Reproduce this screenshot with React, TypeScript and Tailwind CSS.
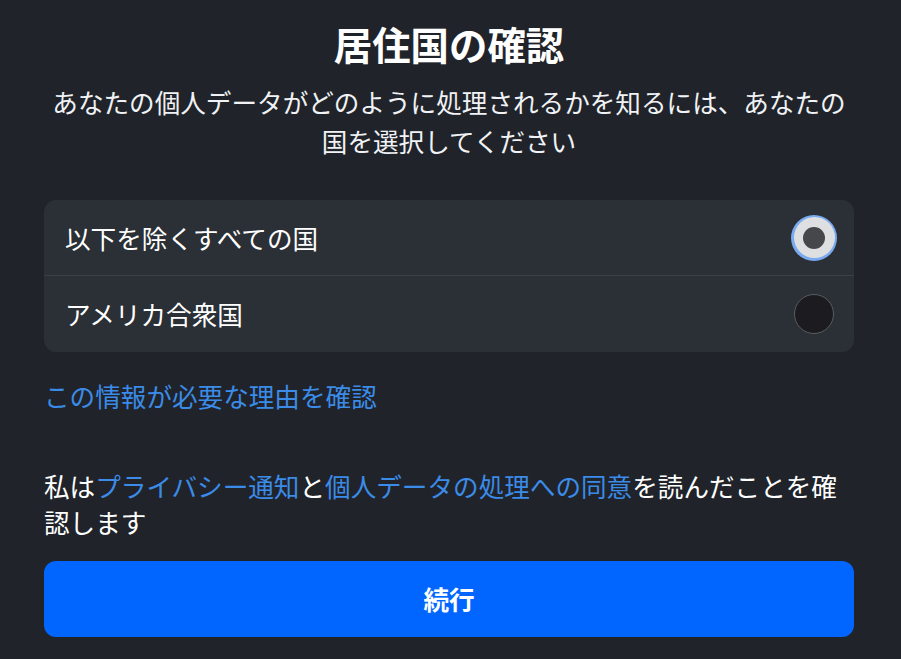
export default function App() {
  const font = { fontFamily: '"Noto Sans CJK JP", "Noto Sans", sans-serif' };
  return (
    <main
      style={font}
      className="min-h-screen bg-[#20242a] text-white pl-[44px] pr-[47px] pt-[18px] pb-10"
    >
      <h1 className="text-center text-[38.4px] font-bold leading-[50px]">居住国の確認</h1>
      <p className="mt-[14px] text-center text-[25.6px] leading-[39px] text-[#f0f2f5]">
        あなたの個人データがどのように処理されるかを知るには、あなたの国を選択してください
      </p>

      {/* Country options */}
      <div className="mt-[40px] rounded-[12px] bg-[#2b2f36] overflow-hidden">
        <label className="flex items-center justify-between h-[76px] pl-[21px] pr-[17px] border-b border-[#3b3f46]">
          <span className="text-[25.6px] leading-none">以下を除くすべての国</span>
          <span className="flex items-center justify-center w-[46px] h-[46px] rounded-full bg-[#7aaaf0]">
            <span className="flex items-center justify-center w-[41px] h-[41px] rounded-full bg-[#dedfe1]">
              <span className="w-[22px] h-[22px] rounded-full bg-[#45474b]" />
            </span>
          </span>
        </label>
        <label className="flex items-center justify-between h-[76px] pl-[21px] pr-[20px]">
          <span className="text-[25.6px] leading-none">アメリカ合衆国</span>
          <span className="w-[40px] h-[40px] rounded-full bg-[#1c1c20] border border-[#5b5c60]" />
        </label>
      </div>

      <a className="block mt-[26px] text-[25.6px] leading-[36px] text-[#3b8be8]">
        この情報が必要な理由を確認
      </a>

      <p className="mt-[54px] text-[25.6px] leading-[36px]">
        私は<a className="text-[#3b8be8]">プライバシー通知</a>と
        <a className="text-[#3b8be8]">個人データの処理への同意</a>を読んだことを確認します
      </p>

      <button className="mt-[21px] w-full h-[76px] rounded-[12px] bg-[#0066ff] text-[25.6px] font-bold text-white">
        続行
      </button>
    </main>
  );
}
